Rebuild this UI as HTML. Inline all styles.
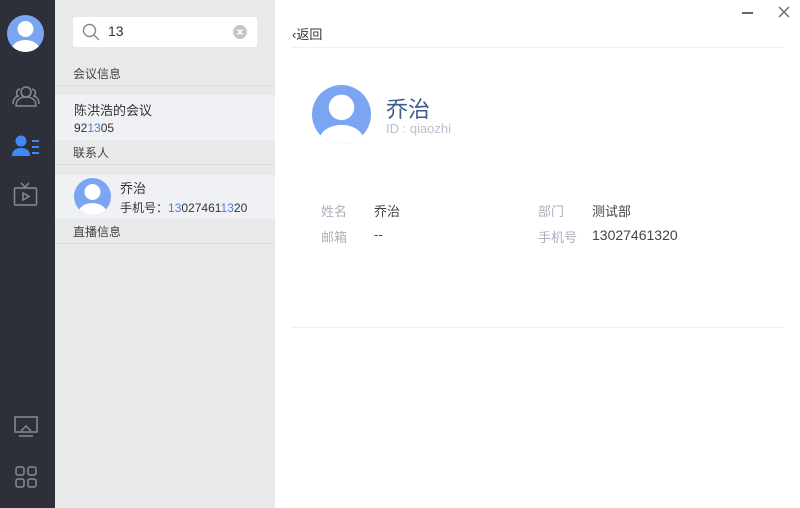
<!DOCTYPE html>
<html><head><meta charset="utf-8"><style>
*{margin:0;padding:0;box-sizing:border-box}
body{width:800px;height:508px;overflow:hidden;font-family:"Liberation Sans","Noto Sans CJK SC",sans-serif;background:#fff;position:relative}
.side{position:absolute;left:0;top:0;width:55px;height:508px;background:#2d3038}
.mid{position:absolute;left:55px;top:0;width:220px;height:508px;background:#e8e9eb}
.abs{position:absolute}
.hd{position:absolute;left:0;width:220px;height:24px;font-size:12px;color:#444;padding-left:18px;line-height:24px;border-bottom:1px solid #dcdde0}
.item{position:absolute;left:0;width:220px;background:#f0f1f4}
.bl{color:#4a7fd8}
.lbl{position:absolute;font-size:13px;color:#aab0bb}
.val{position:absolute;font-size:13px;color:#444}
</style></head><body>
<div class="side">
  <svg class="abs" style="left:7px;top:15px" width="37" height="37" viewBox="0 0 37 37"><circle cx="18.5" cy="18.5" r="18.5" fill="#7ba4f2"/><clipPath id="c1"><circle cx="18.5" cy="18.5" r="18.5"/></clipPath><g clip-path="url(#c1)" fill="#fff"><circle cx="18.5" cy="14" r="8"/><ellipse cx="18.5" cy="35" rx="14" ry="10"/></g></svg>
  <svg class="abs" style="left:12px;top:84px" width="28" height="24" viewBox="0 0 28 24" fill="none" stroke="#858a94" stroke-width="1.5"><circle cx="14" cy="8" r="5"/><path d="M4 22c0-6 4-9 10-9s10 3 10 9z"/><path d="M8 5a4 4 0 0 0-2 7c-3 1-5 4-5 8"/><path d="M20 5a4 4 0 0 1 2 7c3 1 5 4 5 8"/></svg>
  <svg class="abs" style="left:12px;top:134px" width="28" height="24" viewBox="0 0 28 24"><circle cx="9" cy="7" r="5.5" fill="#3d8af7"/><path d="M0 22c0-6 4-8 9-8s9 2 9 8z" fill="#3d8af7"/><rect x="20" y="6" width="7" height="2" fill="#3d8af7"/><rect x="20" y="12" width="7" height="2" fill="#3d8af7"/><rect x="20" y="18" width="7" height="2" fill="#3d8af7"/></svg>
  <svg class="abs" style="left:13px;top:182px" width="26" height="26" viewBox="0 0 26 26" fill="none" stroke="#858a94" stroke-width="1.5"><rect x="1.5" y="6" width="22" height="17" rx="1"/><path d="M8 1l4 4 4-4"/><path d="M10 11v7l6-3.5z"/></svg>
  <svg class="abs" style="left:14px;top:416px" width="24" height="22" viewBox="0 0 24 22" fill="none" stroke="#858a94" stroke-width="1.5"><rect x="1" y="1" width="22" height="15"/><path d="M7 15l5-5 5 5"/><path d="M5 20h14"/></svg>
  <svg class="abs" style="left:15px;top:466px" width="22" height="22" viewBox="0 0 22 22" fill="none" stroke="#858a94" stroke-width="1.5"><rect x="1" y="1" width="8" height="8" rx="2"/><rect x="13" y="1" width="8" height="8" rx="2"/><rect x="1" y="13" width="8" height="8" rx="2"/><rect x="13" y="13" width="8" height="8" rx="2"/></svg>
</div>
<div class="mid">
  <div class="abs" style="left:18px;top:17px;width:184px;height:30px;background:#fff;border-radius:3px"></div>
  <svg class="abs" style="left:27px;top:23px" width="18" height="18" viewBox="0 0 18 18" fill="none" stroke="#888" stroke-width="1.4"><circle cx="7.5" cy="7.5" r="6"/><path d="M12 12l5 5"/></svg>
  <div class="abs" style="left:53px;top:23px;font-size:14px;color:#333">13</div>
  <svg class="abs" style="left:178px;top:25px" width="14" height="14" viewBox="0 0 14 14"><circle cx="7" cy="7" r="7" fill="#c5c7cc"/><path d="M4.5 4.5l5 5M9.5 4.5l-5 5" stroke="#fff" stroke-width="1.5"/></svg>
  <div class="hd" style="top:62px">会议信息</div>
  <div class="item" style="top:95px;height:45px"><div class="abs" style="left:19px;top:5px;font-size:13px;color:#333">陈洪浩的会议</div><div class="abs" style="left:19px;top:26px;font-size:12px;color:#333">92<span class="bl">13</span>05</div></div>
  <div class="hd" style="top:141px">联系人</div>
  <div class="item" style="top:175px;height:44px">
    <svg class="abs" style="left:19px;top:3px" width="37" height="37" viewBox="0 0 37 37"><circle cx="18.5" cy="18.5" r="18.5" fill="#7ba4f2"/><clipPath id="c2"><circle cx="18.5" cy="18.5" r="18.5"/></clipPath><g clip-path="url(#c2)" fill="#fff"><circle cx="18.5" cy="14" r="8"/><ellipse cx="18.5" cy="35" rx="14" ry="10"/></g></svg>
    <div class="abs" style="left:65px;top:3px;font-size:13px;color:#333">乔治</div>
    <div class="abs" style="left:65px;top:24px;font-size:12px;color:#333">手机号：<span class="bl">13</span>027461<span class="bl">13</span>20</div>
  </div>
  <div class="hd" style="top:220px">直播信息</div>
</div>
<div class="abs" style="left:292px;top:24px;font-size:13px;color:#333">‹返回</div>
<div class="abs" style="left:742px;top:12px;width:11px;height:1.5px;background:#666"></div>
<svg class="abs" style="left:778px;top:6px" width="12" height="12" viewBox="0 0 12 12" stroke="#666" stroke-width="1.3"><path d="M1 1l10 10M11 1L1 11"/></svg>
<div class="abs" style="left:291px;top:47px;width:493px;height:1px;background:#eef0f3"></div>
<svg class="abs" style="left:312px;top:85px" width="59" height="59" viewBox="0 0 37 37"><circle cx="18.5" cy="18.5" r="18.5" fill="#7ba4f2"/><clipPath id="c3"><circle cx="18.5" cy="18.5" r="18.5"/></clipPath><g clip-path="url(#c3)" fill="#fff"><circle cx="18.5" cy="14" r="8"/><ellipse cx="18.5" cy="35" rx="14" ry="10"/></g></svg>
<div class="abs" style="left:386px;top:92px;font-size:22px;color:#3f5a8c">乔治</div>
<div class="abs" style="left:386px;top:121px;font-size:13px;color:#b8bfcb">ID : qiaozhi</div>
<div class="lbl" style="left:321px;top:201px">姓名</div><div class="val" style="left:374px;top:201px">乔治</div>
<div class="lbl" style="left:321px;top:227px">邮箱</div><div class="val" style="left:374px;top:227px">--</div>
<div class="lbl" style="left:538px;top:201px">部门</div><div class="val" style="left:592px;top:201px">测试部</div>
<div class="lbl" style="left:538px;top:227px">手机号</div><div class="val" style="left:592px;top:227px;font-size:14px">13027461320</div>
<div class="abs" style="left:291px;top:327px;width:493px;height:1px;background:#eef0f3"></div>
</body></html>
